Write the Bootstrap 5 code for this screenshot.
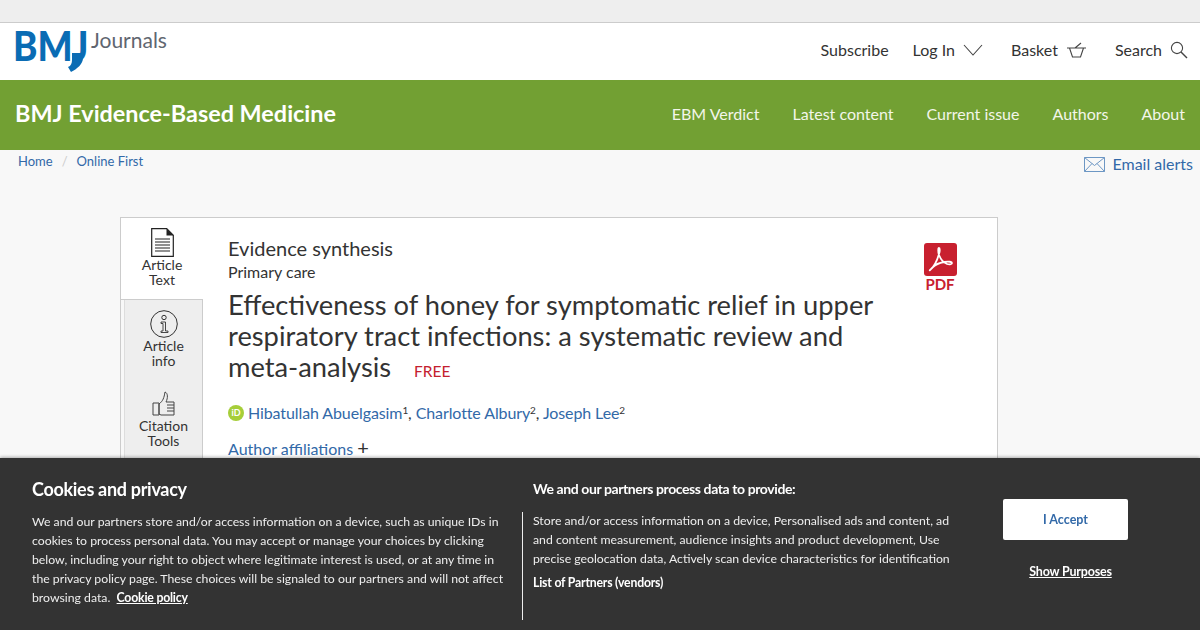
<!DOCTYPE html>
<html lang="en">
<head>
  <meta charset="UTF-8" />
  <title>Effectiveness of honey for symptomatic relief in upper respiratory tract infections</title>
  <meta name="viewport" content="width=device-width, initial-scale=1">
  <link href="https://cdn.jsdelivr.net/npm/bootstrap@5.3.2/dist/css/bootstrap.min.css" rel="stylesheet">
  <style>
    html, body { height: 630px; overflow: hidden; }
    body { font-family: Lato, "Open Sans", sans-serif; background: #f8f8f8; color: #333; font-size: 16px; }
    a { text-decoration: none; color: #3269a8; }
    .top-strip { height: 23px; background: #eee; border-bottom: 1px solid #ccc; }
    .site-head { height: 57px; background: #fff; padding: 0 12px 0 15px; }
    .logo-box { width: 160px; height: 57px; }
    .logo-bmj { font-weight: 900; font-size: 41px; line-height: 1; color: #0a6cb4; margin: 2px 0 0 -2px; transform: scaleX(.9); transform-origin: left; }
    .logo-tail { left: 53px; top: 30px; }
    .logo-journals { left: 76px; top: 4px; font-size: 21px; line-height: 26px; color: #5f6670; }
    .head-link { color: #333; font-size: 16px; line-height: 20px; }
    .head-links { gap: 24px; padding-bottom: 3px; }
    .green-bar { height: 70px; background: #72a033; padding: 0 15px 2px 15px; }
    .journal-name { font-size: 23.4px; font-weight: 700; color: #fff; }
    .green-nav { gap: 33px; }
    .green-nav a { color: #f2f6ea; font-size: 16px; }
    .crumb-row { height: 67px; padding: 0 7px 0 18px; }
    .crumbs { font-size: 13px; line-height: 22px; gap: 9px; }
    .crumbs span { color: #ccc; }
    .email-link { font-size: 16px; padding-top: 4px; gap: 7px; line-height: 20px; }
    .art-wrap { width: 878px; height: 413px; margin-left: 120px; background: #fff; border: 1px solid #ccc; border-bottom: 0; }
    .tab-col { width: 82px; flex: none; background: #f8f8f8; }
    .tab-item { text-align: center; font-size: 14px; line-height: 15px; color: #333; height: 80px; padding-top: 10px; }
    .tab-item svg { display: block; margin: 0 auto; }
    .tab-first { height: 82px; background: #fff; border-bottom: 1px solid #ccc; }
    .tab-rest { background: #eee; height: 330px; margin-left: 3px; width: 79px; border-right: 1px solid #ccc; border-left: 1px solid #ddd; }
    .tab-item .thumb-icon { margin-top: 1px; margin-bottom: 1px; }
    .art-main { padding: 18px 25px 0 25px; flex: 1; }
    .art-type { font-size: 20px; line-height: 24px; }
    .art-sub { font-size: 16px; line-height: 22px; margin: 1px 0 6px; }
    .art-title { font-size: 27.3px; line-height: 31px; font-weight: 400; margin: 0; width: 670px; color: #333; }
    .free-tag { font-size: 15.500px; color: #c4202e; margin-left: 16px; }
    .art-authors { font-size: 16px; line-height: 20px; margin-top: 16px; letter-spacing: -.1px; }
    .art-authors sup { font-size: 10px; }
    .orcid { width: 16px; height: 16px; border-radius: 50%; background: #a6ce39; color: #fff; font-size: 9px; font-weight: 700; line-height: 16px; text-align: center; margin-right: 4px; }
    .art-aff { font-size: 16px; margin-top: 14px; line-height: 20px; }
    .pdf-box { width: 60px; text-align: center; margin-top: 7px; margin-right: 2px; color: #c8202f; font-size: 15px; font-weight: 700; line-height: 16px; }
    .cookie-bar { left: 0; right: 0; bottom: 0; height: 172px; background: #333; color: #eee; box-shadow: 0 -1px 3px rgba(0,0,0,.3); font-size: 12.25px; line-height: 19px; }
    .cookie-left { width: 522px; padding: 20px 0 0 32px; flex: none; }
    .cookie-title { font-size: 18px; line-height: 22px; font-weight: 700; color: #fff; margin: 0 0 12px; letter-spacing: -.3px; }
    .cookie-mid { width: 450px; flex: none; padding: 20px 0 0 11px; position: relative; }
    .cookie-rule { left: 0; top: 54px; height: 108px; width: 1px; background: #eee; }
    .cookie-sub { font-size: 14px; font-weight: 700; line-height: 22px; color: #fff; margin-bottom: 11px; letter-spacing: -.4px; }
    .cookie-text { margin: 0; white-space: nowrap; }
    .cookie-vendors { font-weight: 700; color: #fff; margin-top: 5px; letter-spacing: -.2px; }
    .cookie-actions { width: 125px; margin-left: 31px; padding-top: 41px; text-align: center; }
    .accept-btn { width: 125px; height: 41px; background: #fff; color: #3269a8; font-size: 12.500px; font-weight: 700; border: 0; border-radius: 2px; padding: 0; }
    .cookie-white { color: #fff; font-weight: 700; text-decoration: underline; letter-spacing: -.2px; }
    .show-purposes { display: block; margin-top: 22px; padding-left: 10px; font-size: 12.500px; }
  </style>
</head>
<body>
  <div class="top-strip"></div>

  <header class="site-head d-flex justify-content-between">
    <div class="logo-box position-relative">
      <div class="logo-bmj">BMJ</div>
      <svg class="logo-tail position-absolute" width="20" height="19" viewBox="0 0 20 19"><path d="M4 0h11v5C15 11 9 16 3 19L0 14c3-1 4-4 4-7z" fill="#0a6cb4"/></svg>
      <div class="logo-journals position-absolute">Journals</div>
    </div>
    <nav class="head-links d-flex align-items-center">
      <a class="head-link" href="#">Subscribe</a>
      <a class="head-link d-flex align-items-center gap-2" href="#">Log In
        <svg width="20" height="12" viewBox="0 0 20 12"><path d="M1 1l9 10 9-10" fill="none" stroke="#444" stroke-width="1.1"/></svg>
      </a>
      <a class="head-link d-flex align-items-center gap-2 ms-1" href="#">Basket
        <svg width="21" height="17" viewBox="0 0 21 17"><path d="M1 6h19M3.500 6l3 9h8l3-9M9 6l6-5" fill="none" stroke="#444" stroke-width="1.1"/></svg>
      </a>
      <a class="head-link d-flex align-items-center gap-2 ms-1" href="#">Search
        <svg width="18" height="18" viewBox="0 0 18 18"><circle cx="7" cy="7" r="5.600" fill="none" stroke="#444" stroke-width="1.1"/><path d="M11 11l6 6" stroke="#444" stroke-width="1.4"/></svg>
      </a>
    </nav>
  </header>

  <div class="green-bar d-flex justify-content-between align-items-center">
    <div class="journal-name">BMJ Evidence-Based Medicine</div>
    <nav class="green-nav d-flex">
      <a href="#">EBM Verdict</a>
      <a href="#">Latest content</a>
      <a href="#">Current issue</a>
      <a href="#">Authors</a>
      <a href="#">About</a>
    </nav>
  </div>

  <div class="crumb-row d-flex justify-content-between align-items-start">
    <div class="crumbs d-flex">
      <a href="#">Home</a><span>/</span><a href="#">Online First</a>
    </div>
    <a class="email-link d-flex align-items-center" href="#">
      <svg width="21" height="15" viewBox="0 0 21 15"><path d="M.5.5h20v14H.5zM.5.5l10 8 10-8M.5 14.5l7.500-8M20.500 14.500l-7.500-8" fill="none" stroke="#6d97c4"/></svg>
      Email alerts
    </a>
  </div>

  <section class="art-wrap d-flex">
    <div class="tab-col">
      <div class="tab-item tab-first">
        <svg width="23" height="29" viewBox="0 0 23 29"><path d="M.7.7h15l6.600 6.600v21H.7z" fill="#fff" stroke="#222" stroke-width="1.200"/><path d="M15.500.7l6.800 6.800h-6.800z" fill="#222"/><path d="M4 11h15M4 14h15M4 17h15M4 20h15M4 23h15" stroke="#222" stroke-width="1.200"/></svg>
        Article<br>Text
      </div>
      <div class="tab-rest">
        <div class="tab-item">
          <svg width="28" height="28" viewBox="0 0 28 28"><circle cx="14" cy="14" r="13.300" fill="none" stroke="#333"/><circle cx="14" cy="7.500" r="2.200" fill="none" stroke="#333"/><path d="M11 12h4.500v9H18v1.500h-7V21h2v-7.500h-2z" fill="none" stroke="#333" stroke-width=".9"/></svg>
          Article<br>info
        </div>
        <div class="tab-item">
          <svg class="thumb-icon" width="24" height="26" viewBox="0 0 24 26"><path d="M1 12h6v12H1zM7 13c4-3 5-6 6-12 3 1 3 6 1 10h8v13H9l-2-1z" fill="none" stroke="#444"/><path d="M15 14h7M15 17h7M15 20h7" stroke="#444"/></svg>
          Citation<br>Tools
        </div>
      </div>
    </div>
    <div class="art-main d-flex justify-content-between">
      <div>
        <div class="art-type">Evidence synthesis</div>
        <div class="art-sub">Primary care</div>
        <h1 class="art-title">Effectiveness of honey for symptomatic relief in upper respiratory tract infections: a systematic review and meta-analysis <span class="free-tag">FREE</span></h1>
        <div class="art-authors d-flex align-items-center">
          <span class="orcid">iD</span>
          <span><a href="#">Hibatullah Abuelgasim</a><sup>1</sup>, <a href="#">Charlotte Albury</a><sup>2</sup>, <a href="#">Joseph Lee</a><sup>2</sup></span>
        </div>
        <div class="art-aff"><a href="#">Author affiliations</a> <span class="fs-5 lh-1">+</span></div>
      </div>
      <div class="pdf-box">
        <svg class="d-block mx-auto" width="33" height="33" viewBox="0 0 33 33"><rect width="33" height="33" rx="3" fill="#c8202f"/><path d="M6 27c4-3 7-9 9-16 1-3 1-6 0-6s-1 4 0 7c2 5 5 8 8 9 3 1 5 0 5-1s-3-2-8-1c-5 1-9 3-11 5-2 2-4 4-3 3z" fill="none" stroke="#fff" stroke-width="1.800"/></svg>
        <div>PDF</div>
      </div>
    </div>
  </section>

  <aside class="cookie-bar position-fixed d-flex">
    <div class="cookie-left">
      <h2 class="cookie-title">Cookies and privacy</h2>
      <p class="cookie-text">We and our partners store and/or access information on a device, such as unique IDs in<br>cookies to process personal data. You may accept or manage your choices by clicking<br>below, including your right to object where legitimate interest is used, or at any time in<br>the privacy policy page. These choices will be signaled to our partners and will not affect<br>browsing data. &nbsp;<a class="cookie-white" href="#">Cookie policy</a></p>
    </div>
    <div class="cookie-mid">
      <div class="cookie-rule position-absolute"></div>
      <div class="cookie-sub">We and our partners process data to provide:</div>
      <p class="cookie-text">Store and/or access information on a device, Personalised ads and content, ad<br>and content measurement, audience insights and product development, Use<br>precise geolocation data, Actively scan device characteristics for identification</p>
      <div class="cookie-vendors">List of Partners (vendors)</div>
    </div>
    <div class="cookie-actions">
      <button class="accept-btn" type="button">I Accept</button>
      <a class="cookie-white show-purposes" href="#">Show Purposes</a>
    </div>
  </aside>

  <script src="https://cdn.jsdelivr.net/npm/bootstrap@5.3.2/dist/js/bootstrap.bundle.min.js"></script>
</body>
</html>
